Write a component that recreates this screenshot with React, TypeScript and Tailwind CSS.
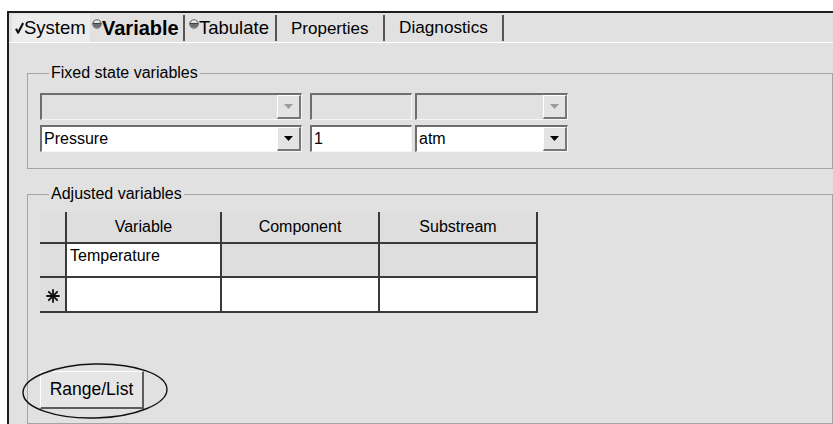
import React from "react";

const FONT = "font-['Liberation_Sans',Arial,sans-serif]";

function CheckGlyph() {
  return (
    <svg width="9" height="12" viewBox="0 0 9 12" className="shrink-0">
      <path d="M1 6.8 L3.2 10.6 L8.2 1" fill="none" stroke="#111" strokeWidth="2.2" strokeLinejoin="round" />
    </svg>
  );
}

function StateGlyph() {
  return (
    <svg width="10" height="10" viewBox="0 0 10 10" className="shrink-0 self-start mt-[5px]">
      <circle cx="5" cy="5" r="4.2" fill="#f2f2f2" stroke="#555" strokeWidth="1" />
      <path d="M0.8 4.6 A4.2 4.2 0 0 0 9.2 4.6 Z" fill="#6f6f6f" />
      <line x1="0.8" y1="4.4" x2="9.2" y2="4.4" stroke="#333" strokeWidth="1" />
    </svg>
  );
}

function TabSeparator() {
  return <div className="w-[2px] h-[26px] bg-[#555] mt-[2px] shrink-0" />;
}

function Arrow({ disabled }: { disabled?: boolean }) {
  return (
    <svg width="9" height="5" viewBox="0 0 9 5">
      <path d="M0 0 H9 L4.5 5 Z" fill={disabled ? "#9c9c9c" : "#000"} />
    </svg>
  );
}

function Combo({ width, value, disabled }: { width: number; value?: string; disabled?: boolean }) {
  return (
    <div
      className={`flex h-full border-t-2 border-l-2 border-[#6e6e6e] border-r border-b border-r-[#f6f6f6] border-b-[#f6f6f6] ${
        disabled ? "bg-[#e1e1e1]" : "bg-white"
      }`}
      style={{ width }}
    >
      <div className="flex-1 pl-[2px] flex items-center text-[16px] text-black leading-none">{value}</div>
      <div className="w-[24px] h-full flex items-center justify-center bg-[#e3e3e3] border-t border-l border-t-white border-l-white border-b-2 border-r-2 border-[#777]">
        <Arrow disabled={disabled} />
      </div>
    </div>
  );
}

function Field({ width, value, disabled }: { width: number; value?: string; disabled?: boolean }) {
  return (
    <div
      className={`flex items-center h-full pl-[2px] border-t-2 border-l-2 border-[#6e6e6e] border-r border-b border-r-[#f6f6f6] border-b-[#f6f6f6] text-[16px] leading-none ${
        disabled ? "bg-[#e1e1e1]" : "bg-white"
      }`}
      style={{ width }}
    >
      {value}
    </div>
  );
}

function Asterisk() {
  return (
    <svg width="14" height="14" viewBox="0 0 14 14">
      <g stroke="#111" strokeWidth="1.8" strokeLinecap="round">
        <line x1="7" y1="1" x2="7" y2="13" />
        <line x1="1" y1="7" x2="13" y2="7" />
        <line x1="2.8" y1="2.8" x2="11.2" y2="11.2" />
        <line x1="11.2" y1="2.8" x2="2.8" y2="11.2" />
      </g>
    </svg>
  );
}

const cell = "border-r-2 border-b-2 border-[#3a3a3a]";

function VariablesGrid() {
  return (
    <div className="grid grid-cols-[27px_155px_158px_158px] grid-rows-[32px_34px_35px] w-[498px] text-[16px] text-black">
      {/* header row */}
      <div className={`${cell} bg-[#dedede]`} />
      <div className={`${cell} bg-[#dedede] flex items-center justify-center`}>Variable</div>
      <div className={`${cell} bg-[#dedede] flex items-center justify-center`}>Component</div>
      <div className={`${cell} bg-[#dedede] flex items-center justify-center`}>Substream</div>
      {/* first data row */}
      <div className={`${cell} bg-[#dedede]`} />
      <div className={`${cell} bg-white pl-[3px] pt-[3px] leading-[18px]`}>Temperature</div>
      <div className={`${cell} bg-[#dedede]`} />
      <div className={`${cell} bg-[#dedede]`} />
      {/* new-row line */}
      <div className={`${cell} bg-[#dedede] flex items-center justify-center pt-[2px]`}>
        <Asterisk />
      </div>
      <div className={`${cell} bg-white`} />
      <div className={`${cell} bg-white`} />
      <div className={`${cell} bg-white`} />
    </div>
  );
}

export default function App() {
  return (
    <div className={`w-[833px] h-[424px] bg-white pt-[11px] pl-[7px] overflow-hidden ${FONT} text-black`}>
      <div className="h-full border-l-2 border-t-2 border-[#1e1e1e] bg-[#e1e1e1] flex flex-col">
        {/* tab strip */}
        <div className="h-[30px] flex items-start border-b border-white leading-none whitespace-nowrap">
          <div className="ml-[3px] mt-[1px] w-[78px] h-[28px] bg-[#ececec] flex items-center pl-[3px]">
            <CheckGlyph />
            <span className="text-[18.5px] w-[62px]">System</span>
          </div>
          <div className="h-[28px] flex items-center ml-[2px] mt-[1px]">
            <StateGlyph />
            <span className="font-bold text-[20px] w-[79px]">Variable</span>
          </div>
          <div className="ml-[2px]">
            <TabSeparator />
          </div>
          <div className="h-[28px] flex items-center ml-[4px] mt-[1px]">
            <StateGlyph />
            <span className="text-[18.5px] w-[72px]">Tabulate</span>
          </div>
          <div className="ml-[4px]">
            <TabSeparator />
          </div>
          <div className="h-[28px] flex items-center ml-[14px] mt-[1px]">
            <span className="text-[17px] w-[77px]">Properties</span>
          </div>
          <div className="ml-[15px]">
            <TabSeparator />
          </div>
          <div className="h-[28px] flex items-center ml-[14px] mt-[1px]">
            <span className="text-[17.2px] w-[89px]">Diagnostics</span>
          </div>
          <div className="ml-[14px]">
            <TabSeparator />
          </div>
        </div>

        {/* page body */}
        <div className="flex-1 pl-[18px] pt-[21px] flex flex-col">
          <fieldset className="border border-[#a4a4a4] pl-[12px] pt-[11px] pb-[16px]">
            <legend className="ml-[9px] px-[2px] text-[16px] leading-[18px]">Fixed state variables</legend>
            <div className="flex flex-col gap-[5px]">
              <div className="flex h-[27px]">
                <Combo width={262} disabled />
                <div className="ml-[8px]">
                  <Field width={102} disabled />
                </div>
                <div className="ml-[3px]">
                  <Combo width={153} disabled />
                </div>
              </div>
              <div className="flex h-[27px]">
                <Combo width={262} value="Pressure" />
                <div className="ml-[8px] h-full">
                  <Field width={102} value="1" />
                </div>
                <div className="ml-[3px]">
                  <Combo width={153} value="atm" />
                </div>
              </div>
            </div>
          </fieldset>

          <fieldset className="mt-[16px] flex-1 border border-[#a4a4a4] pl-[12px] pt-[9px] pb-[14px] flex flex-col">
            <legend className="ml-[9px] px-[2px] text-[16px] leading-[18px]">Adjusted variables</legend>
            <VariablesGrid />
            <div className="flex-1" />
            <div className="relative w-[104px] h-[38px]">
              <button className="w-full h-full bg-[#e6e6e6] border-t border-l border-t-white border-l-white border-b-2 border-r-2 border-[#5c5c5c] text-[17.5px] text-black flex items-center justify-center">
                Range/List
              </button>
              <svg
                className="absolute left-[-19px] top-[-9px] pointer-events-none"
                width="148"
                height="58"
                viewBox="0 0 148 58"
              >
                <ellipse
                  cx="74"
                  cy="29"
                  rx="72"
                  ry="27"
                  fill="none"
                  stroke="#111"
                  strokeWidth="1.4"
                  transform="rotate(-1.5 74 29)"
                />
              </svg>
            </div>
          </fieldset>
        </div>
      </div>
    </div>
  );
}
